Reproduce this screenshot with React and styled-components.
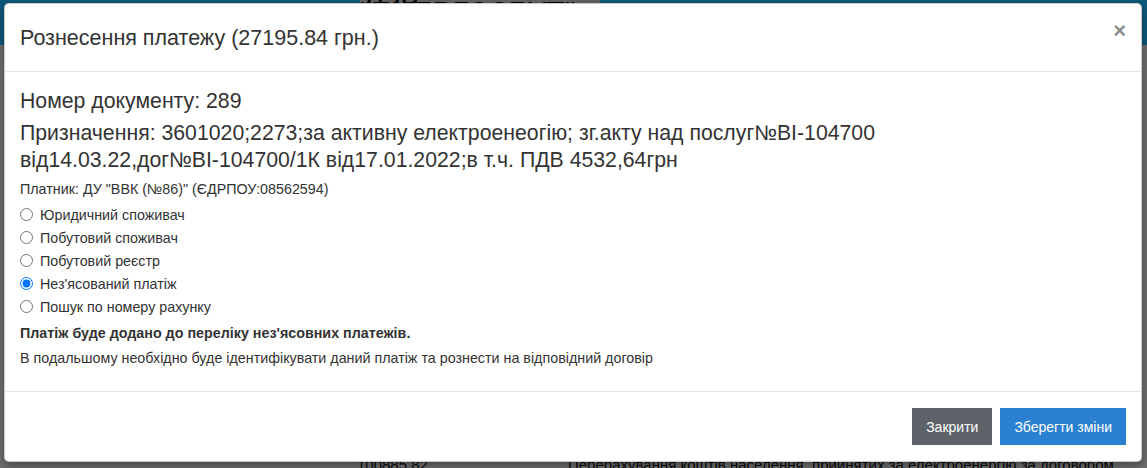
import React from 'react';
import styled, { createGlobalStyle } from 'styled-components';

const GlobalStyle = createGlobalStyle`
  html, body {
    margin: 0;
    padding: 0;
    background: #e0e0e0;
  }
  body {
    font-family: 'Liberation Sans', Arial, sans-serif;
    color: #333;
  }
`;

const Page = styled.div`
  position: relative;
  width: 1147px;
  height: 468px;
  overflow: hidden;
  background: #dcdcdc;
`;

const PageHeader = styled.header`
  height: 45px;
  background: #1ab2f6;
  display: flex;
  align-items: flex-start;
  padding-left: 360px;
  gap: 40px;
`;

const Brand = styled.div`
  height: 8px;
  width: 240px;
  background: #c8c8c8;
  font-size: 30px;
  line-height: 8px;
  overflow: hidden;
  color: #000;
`;

const PageContent = styled.main`
  display: flex;
  flex-direction: column;
  justify-content: flex-end;
  height: 423px;
`;

const PageRow = styled.div`
  display: flex;
  font-size: 15px;
  color: #111;
  height: 8px;
  line-height: 14px;
  margin-bottom: 2px;
`;

const Amount = styled.span`
  width: 211px;
  padding-left: 357px;
`;

const Backdrop = styled.div`
  position: absolute;
  inset: 0;
  background: rgba(0, 0, 0, 0.5);
`;

const Modal = styled.div`
  position: absolute;
  left: 4px;
  top: 3px;
  width: 1138px;
  height: 459px;
  box-sizing: border-box;
  background: #fff;
  border: 1px solid rgba(0, 0, 0, 0.2);
  border-radius: 5px;
  display: flex;
  flex-direction: column;
  box-shadow: 0 3px 9px rgba(0, 0, 0, 0.4);
`;

const ModalHeader = styled.div`
  height: 68px;
  box-sizing: border-box;
  padding: 0 15px;
  border-bottom: 1px solid #e5e5e5;
  display: flex;
  align-items: center;
  justify-content: space-between;
`;

const Title = styled.h4`
  margin: 0;
  font-size: 21.5px;
  font-weight: normal;
  color: #333;
  line-height: 28px;
`;

const Close = styled.button`
  border: 0;
  background: none;
  padding: 0;
  margin: -14px 0 0 0;
  font-family: 'Liberation Sans', Arial, sans-serif;
  font-size: 22px;
  font-weight: bold;
  line-height: 1;
  color: #000;
  opacity: 0.45;
  cursor: pointer;
`;

const ModalBody = styled.div`
  flex: 1;
  padding: 16px 15px 0;
  display: flex;
  flex-direction: column;
`;

const Heading = styled.p`
  margin: 0 0 ${p => p.gap || 0}px;
  font-size: 21.25px;
  line-height: 27px;
  color: #333;
`;

const Small = styled.p`
  margin: 0 0 ${p => p.gap || 0}px;
  font-size: 14.3px;
  line-height: 18px;
  font-weight: ${p => (p.bold ? 'bold' : 'normal')};
  color: #333;
`;

const RadioList = styled.div`
  display: flex;
  flex-direction: column;
  margin-bottom: 6px;
`;

const RadioRow = styled.label`
  display: flex;
  align-items: center;
  height: 23px;
  font-size: 14.3px;
  color: #333;
`;

const Radio = styled.input`
  width: 13px;
  height: 13px;
  margin: 0 7px 0 0;
  accent-color: #0075ff;
`;

const ModalFooter = styled.div`
  height: 70px;
  box-sizing: border-box;
  border-top: 1px solid #e5e5e5;
  padding: 16px 15px 15px;
  display: flex;
  justify-content: flex-end;
  align-items: flex-start;
  gap: 8px;
`;

const Button = styled.button`
  height: 37px;
  padding: 0 ${p => p.px}px;
  border: 0;
  border-radius: 0;
  font-family: 'Liberation Sans', Arial, sans-serif;
  font-size: 14px;
  color: #fff;
  background: ${p => (p.primary ? '#2a80d1' : '#5d6369')};
`;

const options = [
  'Юридичний споживач',
  'Побутовий споживач',
  'Побутовий реєстр',
  'Нез\'ясований платіж',
  'Пошук по номеру рахунку',
];

export default function App() {
  return (
    <Page>
      <GlobalStyle />
      <PageHeader>
        <Brand>ТОВ "ЕНЕРГОЗБУТ"</Brand>
      </PageHeader>
      <PageContent>
        <PageRow>
          <Amount>100885.82</Amount>
          <span>Перерахування коштів населення, прийнятих за електроенергію за договором</span>
        </PageRow>
      </PageContent>
      <Backdrop />
      <Modal>
        <ModalHeader>
          <Title>Рознесення платежу (27195.84 грн.)</Title>
          <Close aria-label="Close">×</Close>
        </ModalHeader>
        <ModalBody>
          <Heading gap={5}>Номер документу: 289</Heading>
          <Heading gap={6}>
            Призначення: 3601020;2273;за активну електроенеогію; зг.акту над послуг№BI-104700
            <br />
            від14.03.22,дог№BI-104700/1К від17.01.2022;в т.ч. ПДВ 4532,64грн
          </Heading>
          <Small gap={5}>Платник: ДУ "ВВК (№86)" (ЄДРПОУ:08562594)</Small>
          <RadioList>
            {options.map((o, i) => (
              <RadioRow key={o}>
                <Radio type="radio" name="kind" defaultChecked={i === 3} />
                {o}
              </RadioRow>
            ))}
          </RadioList>
          <Small bold gap={7}>Платіж буде додано до переліку нез'ясовних платежів.</Small>
          <Small>В подальшому необхідно буде ідентифікувати даний платіж та рознести на відповідний договір</Small>
        </ModalBody>
        <ModalFooter>
          <Button px={14}>Закрити</Button>
          <Button primary px={14}>Зберегти зміни</Button>
        </ModalFooter>
      </Modal>
    </Page>
  );
}
